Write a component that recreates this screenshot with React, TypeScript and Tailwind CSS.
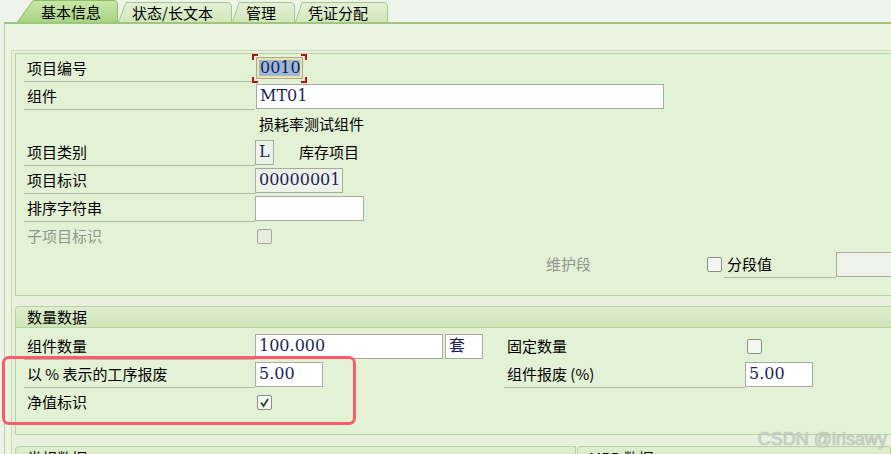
import React from 'react';

const mono = "font-['DejaVu_Serif','Noto_Sans_CJK_SC',serif] text-[16px] text-[#1b1f5a]";

function Tab({ label, w, h, slant, active, pl, id }: { label: string; w: number; h: number; slant: number; active?: boolean; pl: string; id: string }) {
    const d = `M0.5 ${h} L${slant} 0.5 L${w - 5} 0.5 Q${w - 0.5} 0.5 ${w - 0.5} 5 L${w - 0.5} ${h}`;
    return (
        <div className={`relative shrink-0 ${pl} flex items-center ${active ? 'h-[22px]' : 'h-[20px]'}`} style={{ width: w }}>
            <svg className="absolute inset-0" width={w} height={h} viewBox={`0 0 ${w} ${h}`}>
                <defs>
                    <linearGradient id={id} x1="0" y1="0" x2="0" y2="1">
                        <stop offset="0" stopColor={active ? '#c8e7a9' : '#e4f1d6'} />
                        <stop offset="1" stopColor={active ? '#a9d483' : '#d1e7bc'} />
                    </linearGradient>
                </defs>
                <path d={d + ' Z'} fill={`url(#${id})`} />
                <path d={d} fill="none" stroke={active ? '#8dbd67' : '#a5c988'} strokeWidth="1" />
            </svg>
            <span className="relative text-[15px] leading-none pt-[1px]">{label}</span>
        </div>
    );
}

function Label({ children, w = 'w-[231px]', line = true, muted = false }: { children?: React.ReactNode; w?: string; line?: boolean; muted?: boolean }) {
    return (
        <div className={`${w} shrink-0 self-stretch flex items-center pl-[3px] pt-[1px] ${line ? 'border-b border-[#b4b9ae]' : ''} ${muted ? 'text-[#8f968a]' : ''}`}>
            {children}
        </div>
    );
}

function Field({ children, w, ro = false, cls = '' }: { children?: React.ReactNode; w: string; ro?: boolean; cls?: string }) {
    return (
        <div className={`${w} h-[25px] shrink-0 border border-[#a7aaa3] flex items-center px-[3px] ${ro ? 'bg-[#eef2e8]' : 'bg-white'} ${mono} ${cls}`}>
            {children}
        </div>
    );
}

function Check({ checked = false, disabled = false, cls = '' }: { checked?: boolean; disabled?: boolean; cls?: string }) {
    return (
        <div className={`w-[15px] h-[15px] shrink-0 rounded-[2px] border ${disabled ? 'border-[#a4a9a0] bg-[#e6eede]' : 'border-[#8c8f89] bg-[#f4f6f1]'} ${cls}`}>
            {checked && (
                <svg width="13" height="13" viewBox="0 0 13 13">
                    <path d="M3 6.5 L5.5 10 L10 3" fill="none" stroke="#34503a" strokeWidth="2" />
                </svg>
            )}
        </div>
    );
}

function Row({ children }: { children?: React.ReactNode }) {
    return <div className="h-[28px] flex items-center">{children}</div>;
}

export default function App() {
    return (
        <div className="relative w-[891px] h-[454px] overflow-hidden bg-[#eef4e9] font-['Noto_Sans_CJK_SC','Noto_Sans',sans-serif] text-[15px] text-black">
            <div className="flex items-end h-[22px] pl-[17px]">
                <Tab id="t1" label="基本信息" w={101} h={22} slant={16} active pl="pl-[24px]" />
                <Tab id="t2" label="状态/长文本" w={114} h={20} slant={8} pl="pl-[14px]" />
                <Tab id="t3" label="管理" w={63} h={20} slant={7} pl="pl-[14px]" />
                <Tab id="t4" label="凭证分配" w={93} h={20} slant={7} pl="pl-[13px]" />
            </div>
            <div className="ml-[4px] h-[432px] border-l border-t-2 border-l-[#b9d3a3] border-t-[#9ec77d] bg-[#ebf3e1] pl-[6px] pt-[26px]">
                <div className="h-full border-l border-t border-[#c7dbb5] bg-[#e8f1dd] pl-[3px] pt-[2px]">
                    {/* 基本 group */}
                    <div className="w-[900px] border border-r-0 border-[#b7d39f] bg-[#e3f1d4] pl-[8px] pb-[17px]">
                        <Row>
                            <Label>项目编号</Label>
                            <div className="relative ml-[1px] w-[47px] h-[22px] border border-[#a8a99f] bg-[#f3e3a0] p-[2px]">
                                <div className={`h-full bg-[#9db9d8] flex items-center pl-[1px] ${mono}`}>0010</div>
                                <span className="absolute left-[-5px] top-[-4px] w-[6px] h-[6px] border-l-2 border-t-2 border-[#b3141b]" />
                                <span className="absolute right-[-5px] top-[-4px] w-[6px] h-[6px] border-r-2 border-t-2 border-[#b3141b]" />
                                <span className="absolute left-[-5px] bottom-[-5px] w-[6px] h-[6px] border-l-2 border-b-2 border-[#b3141b]" />
                                <span className="absolute right-[-5px] bottom-[-5px] w-[6px] h-[6px] border-r-2 border-b-2 border-[#b3141b]" />
                            </div>
                        </Row>
                        <Row>
                            <Label>组件</Label>
                            <Field w="w-[408px]" cls="ml-[1px]">MT01</Field>
                        </Row>
                        <Row>
                            <Label line={false} />
                            <span className="pl-[4px]">损耗率测试组件</span>
                        </Row>
                        <Row>
                            <Label>项目类别</Label>
                            <Field w="w-[19px]" ro cls="px-[2px]">L</Field>
                            <span className="ml-[25px]">库存项目</span>
                        </Row>
                        <Row>
                            <Label>项目标识</Label>
                            <Field w="w-[88px]" ro cls="px-[2px]">00000001</Field>
                        </Row>
                        <Row>
                            <Label>排序字符串</Label>
                            <Field w="w-[109px]" />
                        </Row>
                        <Row>
                            <Label line={false} muted>子项目标识</Label>
                            <Check disabled cls="ml-[2px]" />
                        </Row>
                        <Row>
                            <div className="w-[522px] shrink-0" />
                            <span className="w-[161px] shrink-0 text-[#8f968a]">维护段</span>
                            <Check />
                            <Label w="w-[112px] ml-[2px]">分段值</Label>
                            <Field w="w-[80px]" ro />
                        </Row>
                    </div>

                    {/* 数量数据 */}
                    <div className="mt-[10px] w-[900px] border border-r-0 border-[#b7d39f] bg-[#e3f1d4] rounded-tl-[4px] pb-[18px]">
                        <div className="h-[21px] border-b border-[#b7d39f] rounded-tl-[4px] bg-gradient-to-b from-[#dfeecf] to-[#cfe5b9] pl-[11px] flex items-center">
                            数量数据
                        </div>
                        <div className="pl-[8px] pt-[4px]">
                            <Row>
                                <Label>组件数量</Label>
                                <Field w="w-[188px]">100.000</Field>
                                <Field w="w-[38px]" cls="ml-[2px]">套</Field>
                                <div className="w-[21px] shrink-0" />
                                <Label w="w-[241px]" line={false}>固定数量</Label>
                                <Check cls="ml-[2px]" />
                            </Row>
                            <Row>
                                <Label>以 % 表示的工序报废</Label>
                                <Field w="w-[68px]">5.00</Field>
                                <div className="w-[181px] shrink-0" />
                                <Label w="w-[241px]">组件报废 (%)</Label>
                                <Field w="w-[68px]">5.00</Field>
                            </Row>
                            <Row>
                                <Label line={false}>净值标识</Label>
                                <Check checked cls="ml-[2px]" />
                            </Row>
                        </div>
                    </div>

                    {/* 常规数据 / MRP 数据 */}
                    <div className="mt-[11px] flex">
                        <div className="w-[561px] shrink-0 h-[30px] border border-[#b7d39f] rounded-tl-[4px] bg-gradient-to-b from-[#dfeecf] to-[#cfe5b9] pl-[11px] leading-[22px]">
                            常规数据
                        </div>
                        <div className="ml-[1px] w-[400px] h-[30px] border border-[#b7d39f] rounded-tl-[4px] bg-gradient-to-b from-[#dfeecf] to-[#cfe5b9] pl-[11px] leading-[22px]">
                            MRP 数据
                        </div>
                    </div>
                </div>
            </div>

            {/* highlight box */}
            <div className="absolute left-[2px] top-[356px] w-[354px] h-[69px] border-[3px] border-[#fd5a6c] rounded-[7px]" />

            {/* watermark */}
            <div className="absolute right-[4px] top-[426px] font-['Liberation_Sans',sans-serif] text-[18px] text-[#cfd3cb] [text-shadow:0_0_1px_#8e948a]">
                CSDN @irisawy
            </div>
        </div>
    );
}
